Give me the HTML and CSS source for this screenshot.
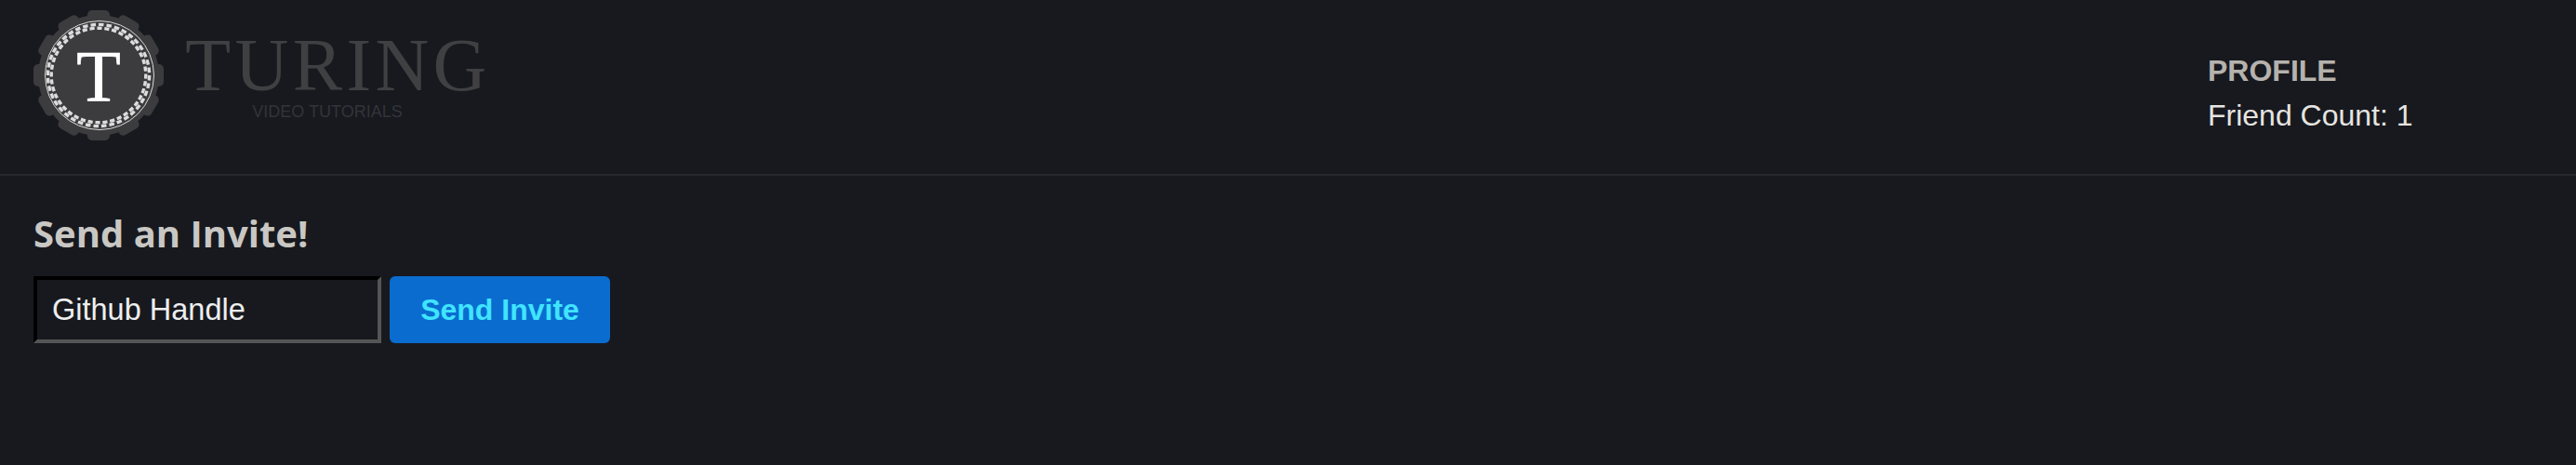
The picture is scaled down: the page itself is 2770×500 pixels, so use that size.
FILE: index.html
```html
<!DOCTYPE html>
<html lang="en">
<head>
    <meta charset="UTF-8">
    <title>Turing Video Tutorials</title>
    <link rel="stylesheet" href="styles.css">
</head>
<body>
    <!-- Header -->
    <header class="header">
        <div class="brand">
            <svg class="logo" viewBox="0 0 140 140" width="140" height="140">
                <g fill="#3c3c3e">
                    <circle cx="70" cy="70" r="65"/>
                    <rect x="58" y="0" width="24" height="140" rx="5"/>
                    <rect x="58" y="0" width="24" height="140" rx="5" transform="rotate(30 70 70)"/>
                    <rect x="58" y="0" width="24" height="140" rx="5" transform="rotate(60 70 70)"/>
                    <rect x="58" y="0" width="24" height="140" rx="5" transform="rotate(90 70 70)"/>
                    <rect x="58" y="0" width="24" height="140" rx="5" transform="rotate(120 70 70)"/>
                    <rect x="58" y="0" width="24" height="140" rx="5" transform="rotate(150 70 70)"/>
                </g>
                <g fill="none" stroke="#dcdcdc">
                    <circle cx="71" cy="70" r="58.5" stroke-width="1"/>
                    <circle cx="70" cy="70" r="54.6" stroke-width="3.4" pathLength="400" stroke-dasharray="6.5 3.5"/>
                    <circle cx="70" cy="70" r="50.8" stroke-width="3.4" pathLength="400" stroke-dasharray="6.5 3.5" stroke-dashoffset="2"/>
                </g>
                <text class="logo-letter" x="70" y="97" text-anchor="middle">T</text>
            </svg>
            <div class="brand-text">
                <div class="brand-name">TURING</div>
                <div class="brand-sub">VIDEO TUTORIALS</div>
            </div>
        </div>
        <div class="profile">
            <div class="profile-title">PROFILE</div>
            <div class="profile-count">Friend Count: 1</div>
        </div>
    </header>

    <!-- Invite form -->
    <main class="invite">
        <h2>Send an Invite!</h2>
        <form class="invite-form">
            <input type="text" class="invite-input" value="Github Handle">
            <button type="button" class="invite-button">Send Invite</button>
        </form>
    </main>
</body>
</html>
```

FILE: styles.css
```css
body {
    margin: 0;
    padding: 0;
    height: 500px;
    overflow: hidden;
    background-color: #17191f;
    font-family: "Liberation Sans", Arial, sans-serif;
}
.header {
    display: flex;
    justify-content: space-between;
    align-items: flex-start;
    height: 187px;
    border-bottom: 2px solid #26282f;
}
.brand {
    display: flex;
    align-items: flex-start;
    gap: 22px;
    padding: 11px 0 0 36px;
}
.logo {
    display: block;
}
.logo-letter {
    font-family: "Liberation Serif", serif;
    font-size: 78px;
    fill: #ffffff;
    stroke: #ffffff;
    stroke-width: 0.7px;
}
.brand-text {
    display: flex;
    flex-direction: column;
    align-items: center;
    width: 326px;
}
.brand-name {
    font-family: "Liberation Serif", serif;
    font-size: 80px;
    line-height: 80px;
    letter-spacing: 4.4px;
    margin: 19px 0 0 5px;
    color: #404042;
}
.brand-sub {
    font-size: 18px;
    line-height: 22px;
    margin: -1px 18px 0 0;
    color: #333438;
}
.profile {
    width: 396px;
    padding-top: 58px;
    box-sizing: border-box;
}
.profile-title {
    font-size: 32px;
    line-height: 36px;
    font-weight: bold;
    color: #b5b2ad;
}
.profile-count {
    font-size: 32px;
    line-height: 36px;
    margin-top: 12px;
    color: #e6e4e0;
}
.invite {
    padding: 35px 0 0 36px;
}
h2 {
    margin: 0 0 19px 0;
    font-family: "Open Sans", sans-serif;
    font-size: 40px;
    line-height: 54px;
    font-weight: bold;
    color: #c9c7c3;
}
.invite-form {
    display: flex;
    gap: 9px;
}
.invite-input {
    width: 374px;
    height: 72px;
    padding: 0 16px;
    box-sizing: border-box;
    border-width: 4px;
    border-style: solid;
    border-color: #000000 #555555 #555555 #000000;
    background-color: #17191f;
    color: #eeeeee;
    font-family: "Liberation Sans", Arial, sans-serif;
    font-size: 32.5px;
}
.invite-button {
    width: 237px;
    height: 72px;
    border: none;
    border-radius: 6px;
    background-color: #0a6ccf;
    color: #40e4ff;
    font-family: "Liberation Sans", Arial, sans-serif;
    font-size: 32px;
    font-weight: bold;
    cursor: pointer;
}
```
